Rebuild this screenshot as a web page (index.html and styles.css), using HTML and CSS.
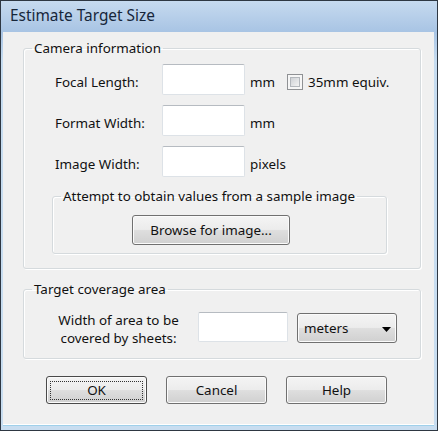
FILE: index.html
```html
<!DOCTYPE html>
<html>
<head>
<meta charset="utf-8">
<link rel="stylesheet" href="styles.css">
</head>
<body>
<div class="window">
  <div class="titlebar">Estimate Target Size</div>
  <div class="client">
    <fieldset class="group camera">
      <legend>Camera information</legend>
      <div class="rows">
        <div class="row">
          <span class="lbl">Focal Length:</span>
          <span class="input"></span>
          <span class="unit">mm</span>
          <span class="check"><span class="check-inner"></span></span>
          <span class="check-label">35mm equiv.</span>
        </div>
        <div class="row">
          <span class="lbl">Format Width:</span>
          <span class="input"></span>
          <span class="unit">mm</span>
        </div>
        <div class="row">
          <span class="lbl">Image Width:</span>
          <span class="input"></span>
          <span class="unit">pixels</span>
        </div>
      </div>
      <fieldset class="group sample">
        <legend>Attempt to obtain values from a sample image</legend>
        <div class="btn browse"><span>Browse for image...</span></div>
      </fieldset>
    </fieldset>
    <fieldset class="group target">
      <legend>Target coverage area</legend>
      <div class="target-row">
        <span class="tlabel">Width of area to be<br>covered by sheets:</span>
        <span class="input wide"></span>
        <span class="select"><span class="select-text">meters</span><svg class="arrow" width="9" height="5" viewBox="0 0 9 5"><path d="M0 0H9L4.5 5Z" fill="#000"/></svg></span>
      </div>
    </fieldset>
    <div class="buttons">
      <div class="btn dlg default"><span class="focus">OK</span></div>
      <div class="btn dlg"><span>Cancel</span></div>
      <div class="btn dlg"><span>Help</span></div>
    </div>
  </div>
</div>
</body>
</html>
```
FILE: styles.css
```css
* { box-sizing: border-box; }
html, body { margin: 0; padding: 0; }
body {
  width: 438px;
  height: 431px;
  overflow: hidden;
  background: #fff;
  font-family: "Noto Sans", "Liberation Sans", sans-serif;
  font-size: 13.4px;
  color: #111;
}
.window {
  width: 438px;
  height: 431px;
  display: flex;
  flex-direction: column;
  border: 1px solid #2e3742;
  background: linear-gradient(to bottom, #c6daef 0px, #a8c4e4 31px, #c6dcf0 60px, #c8ddf0 100%);
}
.titlebar {
  height: 31px;
  flex: none;
  padding-left: 9px;
  padding-top: 5px;
  font-size: 15.4px;
  line-height: 20px;
  color: #16263a;
}
.client {
  flex: 1;
  margin: 0 3px 6px 2px;
  background: #f0f0f0;
  display: flex;
  flex-direction: column;
  box-shadow: 0 1px 0 #ffffff, 0 2px 0 #9fd0ea;
}
.group {
  border: 1px solid #d5dadd;
  border-radius: 3px;
  box-shadow: 1px 1px 0 #ffffff, inset 1px 1px 0 #ffffff;
  margin: 0;
  min-width: 0;
}
.group > legend {
  padding: 0 2px;
  line-height: 17px;
}
.camera {
  margin: 8px 13px 0 20px;
  padding: 7px 0 14px 8px;
}
.rows {
  margin-left: 23px;
  display: flex;
  flex-direction: column;
  gap: 10px;
}
.row {
  display: flex;
  align-items: center;
  height: 31px;
}
.lbl {
  width: 107px;
  padding-top: 6px;
  line-height: 17px;
}
.input {
  width: 83px;
  height: 31px;
  background: #fff;
  border: 1px solid #dde2e7;
  border-top-color: #b6bbc1;
  border-radius: 2px;
}
.unit {
  margin-left: 5px;
  padding-top: 6px;
  line-height: 17px;
}
.check {
  margin-left: 12px;
  margin-top: 5px;
  width: 16px;
  height: 16px;
  border: 1px solid #8f9194;
  background: #f6f6f6;
  padding: 2px;
  display: flex;
}
.check-inner {
  flex: 1;
  border: 1px solid #b3b7bc;
  background: linear-gradient(135deg, #cfd2d6, #f2f2f2);
}
.check-label {
  margin-left: 5px;
  padding-top: 6px;
  line-height: 17px;
}
.sample {
  margin: 11px 0 0 20px;
  width: 335px;
  padding: 10px 0 8px 8px;
}
.btn {
  display: flex;
  align-items: center;
  justify-content: center;
  border: 1px solid #707070;
  border-radius: 3px;
  background: linear-gradient(to bottom, #f4f4f4 0%, #ececec 48%, #dedede 52%, #d0d0d0 100%);
  box-shadow: inset 0 0 0 1px #fbfbfb;
  line-height: 17px;
  padding-top: 1px;
}
.browse {
  margin-left: 71px;
  width: 158px;
  height: 30px;
}
.target {
  margin: 12px 13px 0 20px;
  padding: 13px 0 11px 8px;
}
.target-row {
  display: flex;
  align-items: flex-start;
}
.tlabel {
  margin-left: 21px;
  width: 131px;
  text-align: center;
  line-height: 18px;
}
.input.wide {
  margin-left: 14px;
  margin-top: 1px;
  width: 90px;
  height: 30px;
}
.select {
  margin-left: 9px;
  margin-top: 2px;
  width: 100px;
  height: 30px;
  display: flex;
  align-items: center;
  justify-content: space-between;
  padding: 1px 5px 0 6px;
  border: 1px solid #707070;
  border-radius: 3px;
  background: linear-gradient(to bottom, #f4f4f4 0%, #ececec 48%, #dedede 52%, #d0d0d0 100%);
  box-shadow: inset 0 0 0 1px #fbfbfb;
  line-height: 17px;
}
.arrow { display: block; margin-top: 1px; }
.buttons {
  display: flex;
  gap: 19px;
  margin-top: 17px;
  padding-left: 43px;
}
.dlg {
  width: 101px;
  height: 28px;
}
.default {
  border-color: #4a4a4a;
}
.focus {
  align-self: stretch;
  flex: 1;
  margin: 3px;
  border: 1px dotted #333;
  display: flex;
  align-items: center;
  justify-content: center;
}
```
